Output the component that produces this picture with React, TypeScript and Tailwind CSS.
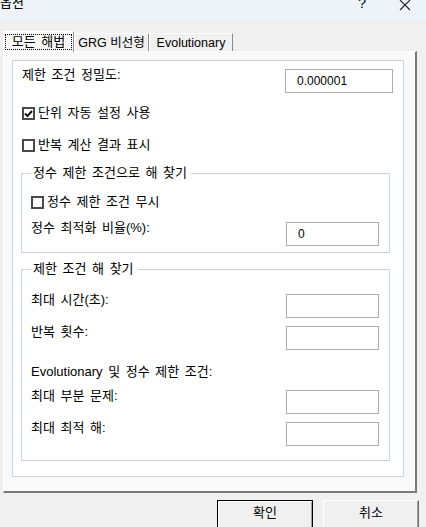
import React from "react";

const font = "font-['Liberation_Sans','Noto_Sans_CJK_KR',sans-serif]";

function Check({ checked }: { checked?: boolean }) {
  return (
    <span className="w-[13px] h-[13px] border-2 border-[#4a4a4a] bg-white flex items-center justify-center shrink-0">
      {checked && (
        <svg width="9" height="9" viewBox="0 0 9 9">
          <path d="M1 4.5 L3.5 7 L8 2" fill="none" stroke="#111" strokeWidth="2" />
        </svg>
      )}
    </span>
  );
}

function Field({ value, w = "w-[93px]" }: { value?: string; w?: string }) {
  return (
    <div className={`${w} h-[24px] border border-[#adadad] bg-white pl-[11px] text-[12px] leading-[22px] text-black font-['Liberation_Sans',sans-serif]`}>
      {value}
    </div>
  );
}

function InputRow({ label, value, mt }: { label: string; value?: string; mt: string }) {
  return (
    <div className={`flex justify-between items-start pr-[10px] ${mt}`}>
      <span className="-mt-[2px] leading-[16px]">{label}</span>
      <Field value={value} />
    </div>
  );
}

function Group({ title, h, children }: { title: string; h: string; children: React.ReactNode }) {
  return (
    <fieldset className={`ml-[8px] w-[369px] ${h} border border-[#c9d4df] pl-[9px]`}>
      <legend className="pl-[2px] pr-[4px] leading-[16px]">{title}</legend>
      {children}
    </fieldset>
  );
}

function Tab({ label, active, w }: { label: string; active?: boolean; w: string }) {
  if (active) {
    return (
      <div className={`relative z-10 h-[21px] ${w} border-l border-t border-white border-r border-r-[#8c8c8c] bg-[#f9f9f9] flex items-center justify-center -mb-px`}>
        <div className="border border-dotted border-black h-[16px] w-[67px] flex items-center justify-center leading-[16px]">
          {label}
        </div>
      </div>
    );
  }
  return (
    <div className={`h-[18px] ${w} border-l border-t border-white border-r border-r-[#8c8c8c] bg-[#f0f0f0] flex items-center justify-center leading-[16px] text-[12.5px] [word-spacing:0px]`}>
      {label}
    </div>
  );
}

export default function App() {
  return (
    <div className={`w-[426px] h-[527px] overflow-hidden bg-[#f0f0f0] text-[13px] text-black [word-spacing:2px] ${font}`}>
      {/* title bar */}
      <div className="h-[21px] bg-[#eef2f9] flex items-start relative">
        <span className="-mt-[5px] leading-[16px]">옵션</span>
        <span className="ml-auto mr-[33px] -mt-[5px] leading-[16px] text-[14px]">?</span>
        <svg width="12" height="11" viewBox="0 0 12 11" className="mr-[15px] mt-0">
          <path d="M1 0 L11 10 M11 0 L1 10" stroke="#222" strokeWidth="1.1" />
        </svg>
      </div>

      {/* tabs */}
      <div className="flex items-end pl-[3px] mt-[10px]">
        <Tab label="모든 해법" active w="w-[71px]" />
        <Tab label="GRG 비선형" w="w-[75px]" />
        <Tab label="Evolutionary" w="w-[84px]" />
      </div>

      {/* tab page */}
      <div className="ml-[3px] w-[414px] h-[442px] bg-[#f9f9f9] border-l border-t border-white border-r-2 border-b-2 border-r-[#7a7a7a] border-b-[#7a7a7a] pl-[8px] pr-[11px] pt-[8px]">
        <div className="h-[417px] bg-white border border-[#c9d4df] flex flex-col">
          <div className="flex justify-between items-start pl-[9px] pr-[10px] mt-[8px]">
            <span className="-mt-[2px] leading-[16px]">제한 조건 정밀도:</span>
            <Field value="0.000001" w="w-[108px]" />
          </div>

          <div className="flex items-center gap-[3px] pl-[9px] mt-[12px] leading-[16px]">
            <Check checked />
            <span>단위 자동 설정 사용</span>
          </div>

          <div className="flex items-center gap-[3px] pl-[9px] mt-[16px] leading-[16px]">
            <Check />
            <span>반복 계산 결과 표시</span>
          </div>

          <div className="mt-[12px]">
            <Group title="정수 제한 조건으로 해 찾기" h="h-[88px]">
              <div className="flex items-center gap-[3px] mt-[13px] leading-[16px]">
                <Check />
                <span>정수 제한 조건 무시</span>
              </div>
              <InputRow label="정수 최적화 비율(%):" value="0" mt="mt-[12px]" />
            </Group>
          </div>

          <div className="mt-[8px]">
            <Group title="제한 조건 해 찾기" h="h-[200px]">
              <InputRow label="최대 시간(초):" mt="mt-[17px]" />
              <InputRow label="반복 횟수:" mt="mt-[8px]" />
              <div className="mt-[14px] leading-[16px]">Evolutionary 및 정수 제한 조건:</div>
              <InputRow label="최대 부분 문제:" mt="mt-[10px]" />
              <InputRow label="최대 최적 해:" mt="mt-[8px]" />
            </Group>
          </div>
        </div>
      </div>

      {/* buttons */}
      <div className="flex justify-end gap-[10px] pr-[7px] mt-[7px]">
        <button className="w-[96px] h-[30px] border border-black bg-[#f0f0f0] shadow-[inset_1px_1px_0_#fff,inset_-1px_-1px_0_#a0a0a0] flex justify-center items-start pt-[4px] leading-[16px]">
          확인
        </button>
        <button className="w-[96px] h-[30px] border border-t-white border-l-white border-r-[#696969] border-b-[#696969] bg-[#f0f0f0] shadow-[inset_-1px_-1px_0_#a0a0a0] flex justify-center items-start pt-[4px] leading-[16px]">
          취소
        </button>
      </div>
    </div>
  );
}
